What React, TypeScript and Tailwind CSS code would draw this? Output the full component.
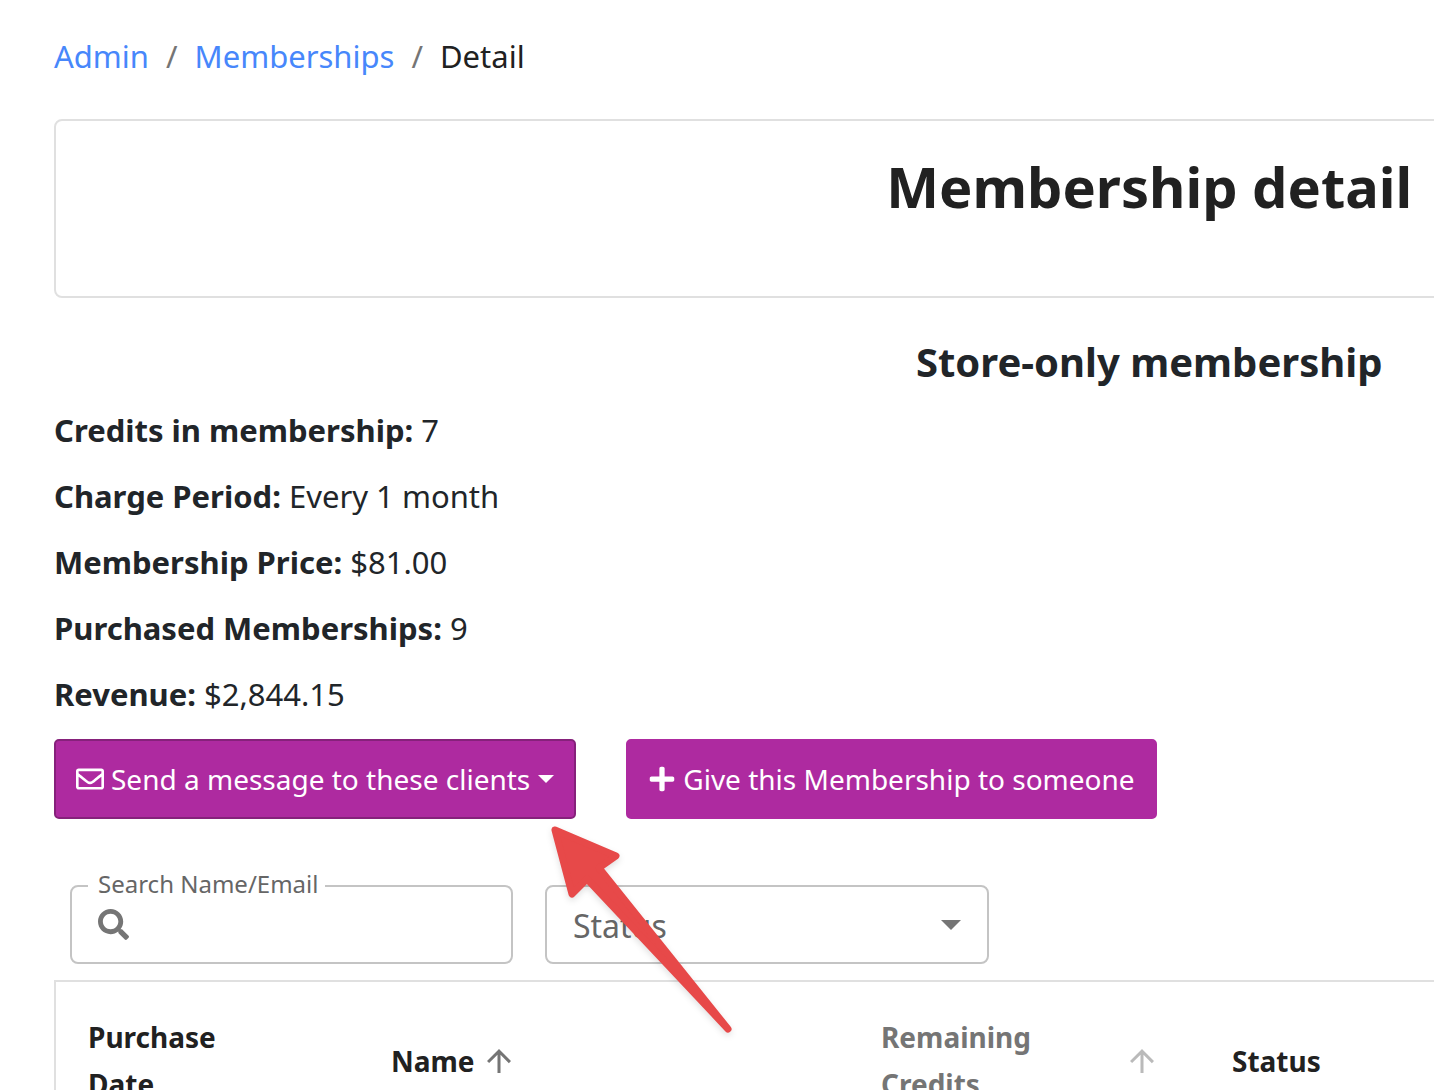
import React, { useState } from 'react';
import { FaPlus, FaRegEnvelope, FaSearch } from 'react-icons/fa';

interface SummaryItem {
  label: string;
  value: string;
}

const summary: SummaryItem[] = [
  { label: 'Credits in membership', value: '7' },
  { label: 'Charge Period', value: 'Every 1 month' },
  { label: 'Membership Price', value: '$81.00' },
  { label: 'Purchased Memberships', value: '9' },
  { label: 'Revenue', value: '$2,844.15' },
];

const SortArrow: React.FC<{ className?: string }> = ({ className = '' }) => (
  <svg width="36" height="36" viewBox="0 0 24 24" fill="currentColor" className={`shrink-0 ${className}`}>
    <path d="M4 12l1.41 1.41L11 7.83V20h2V7.83l5.58 5.59L20 12l-8-8-8 8z" />
  </svg>
);

const PointerArrow: React.FC = () => (
  <svg
    width="200"
    height="226"
    viewBox="540 815 200 226"
    className="absolute left-[540px] top-[815px] pointer-events-none drop-shadow-md"
  >
    <path
      d="M555 830L616 856L599 868L728 1029L587 879L572 894Z"
      fill="#e74949"
      stroke="#e74949"
      strokeWidth="7"
      strokeLinejoin="round"
    />
  </svg>
);

const App: React.FC = () => {
  const [search, setSearch] = useState('');
  const [status, setStatus] = useState('');

  return (
    <div className="relative h-screen overflow-hidden bg-white font-['Noto_Sans',sans-serif] text-[31px] leading-[48px] text-[#212529]">
      <div className="w-[160vw] pl-[54px] pr-[50px] pt-8">
        <nav aria-label="Breadcrumb">
          <ol className="flex">
            <li><a href="#admin" className="text-[#4787fb]">Admin</a></li>
            <li aria-hidden="true" className="mx-[17px] text-[#757575]">/</li>
            <li><a href="#memberships" className="text-[#4787fb]">Memberships</a></li>
            <li aria-hidden="true" className="mx-[17px] text-[#757575]">/</li>
            <li className="text-[#212121]">Detail</li>
          </ol>
        </nav>

        <header className="mt-[39px] rounded-lg border-2 border-[#e0e0e0] px-8 pt-[31px] pb-[76px]">
          <h1 className="text-center text-[56px] leading-[68px] font-bold text-[#212121]">Membership detail</h1>
        </header>

        <h2 className="mt-10 text-center text-[40px] leading-[48px] font-bold">Store-only membership</h2>

        <div className="mt-5 flex flex-col gap-[18px]">
          {summary.map(item => (
            <p key={item.label}><b>{item.label}:</b> {item.value}</p>
          ))}
        </div>

        <div className="mt-[21px] flex gap-[50px] text-[28px] leading-[42px] text-white">
          <button className="flex h-20 items-center rounded-[5px] border-2 border-[#86217b] bg-[#ae2aa0] px-5">
            <FaRegEnvelope className="mr-[7px]" />
            Send a message to these clients
            <span className="ml-2 border-x-8 border-t-8 border-x-transparent border-t-white" />
          </button>
          <button className="flex h-20 items-center rounded-[5px] border-2 border-[#ae2aa0] bg-[#ae2aa0] px-5">
            <FaPlus className="mr-[7px]" />
            Give this Membership to someone
          </button>
        </div>

        <div className="mt-[66px] flex gap-8 px-4">
          <div className="relative w-[443px]">
            <label htmlFor="search" className="absolute -top-4 left-[18px] bg-white pl-[10px] pr-[7px] text-[24px] leading-[30px] text-[#666666]">
              Search Name/Email
            </label>
            <FaSearch className="absolute left-7 top-6 text-[#757575]" />
            <input
              id="search"
              type="text"
              value={search}
              onChange={e => setSearch(e.target.value)}
              className="h-[79px] w-full rounded-lg border-2 border-[#c4c4c4] pl-[76px] pr-7 outline-none"
            />
          </div>
          <div className="relative w-[444px]">
            <select
              aria-label="Status"
              value={status}
              onChange={e => setStatus(e.target.value)}
              className="h-[79px] w-full appearance-none rounded-lg border-2 border-[#c4c4c4] bg-transparent px-[26px] pt-[3px] text-[32px] text-[#666666] outline-none"
            >
              <option value="">Status</option>
            </select>
            <svg width="20" height="10" viewBox="0 0 20 10" className="absolute right-7 top-[35px] pointer-events-none">
              <path d="M0 0h20L10 10z" fill="#757575" />
            </svg>
          </div>
        </div>

        <div className="mt-4 border-2 border-[#e0e0e0]">
          <table className="w-full table-fixed text-left text-[28px] leading-[47px] text-[#212121]">
            <colgroup>
              <col className="w-[303px]" />
              <col className="w-[490px]" />
              <col className="w-[351px]" />
              <col />
            </colgroup>
            <thead>
              <tr>
                <th className="py-8 pl-8 pr-[100px] font-bold">Purchase Date</th>
                <th className="p-8 font-bold">
                  <button className="flex items-center gap-1.5">
                    Name
                    <SortArrow className="text-[#757575]" />
                  </button>
                </th>
                <th className="py-8 pl-8 pr-10 font-bold text-[#757575]">
                  <button className="flex w-full items-center justify-between text-left">
                    Remaining Credits
                    <SortArrow className="text-[#bababa]" />
                  </button>
                </th>
                <th className="p-8 font-bold">Status</th>
              </tr>
            </thead>
          </table>
        </div>
      </div>
      <PointerArrow />
    </div>
  );
};

export default App;
